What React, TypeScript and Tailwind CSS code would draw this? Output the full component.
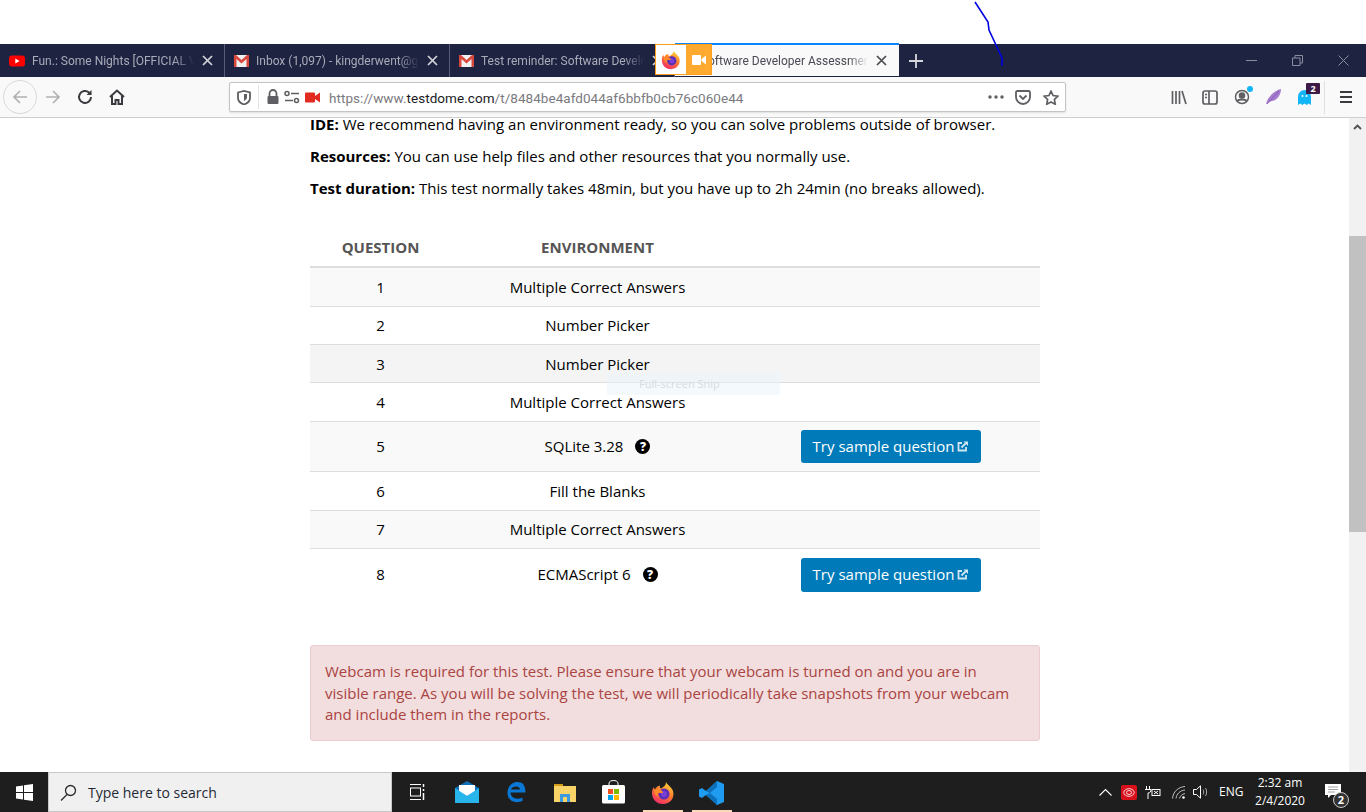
import React from "react";

const FirefoxIcon = ({ size = 24 }: { size?: number }) => (
  <svg width={size} height={size} viewBox="0 0 24 24" className="shrink-0">
    <defs>
      <linearGradient id="ffg" x1="0.7" y1="0" x2="0.2" y2="1">
        <stop offset="0" stopColor="#ffd43a" />
        <stop offset="0.45" stopColor="#ff7a2f" />
        <stop offset="1" stopColor="#f0246e" />
      </linearGradient>
    </defs>
    <path d="M15 1c1 3 5 4 7 9 2 7-3 13-10 13C5 23 1 18 1 12c0-3 1-5 2-6 0 1 .5 2 1 2.500C5 6 7 5 9 4.500 8.500 6 9 7 10 7.500 12 6 15 5 15 1z" fill="url(#ffg)" />
    <circle cx="13" cy="13" r="5.500" fill="#5b2fb5" />
    <circle cx="13" cy="13" r="3" fill="#7a3fd6" />
    <path d="M3 9c2-1 5-1 7 0 1 1 2 2 2 3H7c-1 2 0 4 2 5-3-1-6-4-6-8z" fill="#ff8a2a" />
  </svg>
);

const YouTube = () => (
  <svg width="16" height="12" viewBox="0 0 16 12" className="shrink-0">
    <rect width="16" height="11" y="0.500" rx="3" fill="#f00" />
    <path d="M6.300 3.500v5l4.200-2.500z" fill="#fff" />
  </svg>
);

const Gmail = () => (
  <svg width="15" height="12" viewBox="0 0 15 12" className="shrink-0">
    <rect width="15" height="12" fill="#f1f1f1" />
    <path d="M0 0h2l5.500 5L13 0h2v12h-2.500V4L7.500 8.500 2.500 4v8H0z" fill="#d8483c" />
  </svg>
);

const Close = ({ c = "#d5d6dc" }: { c?: string }) => (
  <svg width="11" height="11" viewBox="0 0 11 11" className="shrink-0">
    <path d="M1 1l9 9M10 1l-9 9" stroke={c} strokeWidth="1.700" />
  </svg>
);

function Tab({ icon, title, active }: { icon?: React.ReactNode; title: string; active?: boolean }) {
  return (
    <div
      className={
        active
          ? "w-[224px] h-full flex items-center pl-[36px] pr-[12px] bg-[#f9f9fa] border-t-2 border-[#0a84ff] text-[#4a4a55] -mt-px"
          : "w-[225px] h-full flex items-center pl-[9px] pr-[11px] border-r border-[#5a5d75] text-[#a9abb8]"
      }
    >
      {icon}
      <span
        className={
          active
            ? "flex-1 min-w-0 whitespace-nowrap text-[12px] pt-[1px] -ml-[3px] [mask-image:linear-gradient(to_right,black_88%,transparent)]"
            : "flex-1 min-w-0 whitespace-nowrap text-[12px] pt-[1px] ml-[7px] [mask-image:linear-gradient(to_right,black_88%,transparent)]"
        }
      >
        {title}
      </span>
      <span className="ml-[8px]">
        <Close c={active ? "#4a4a4f" : "#d5d6dc"} />
      </span>
    </div>
  );
}

function Row({ q, env, bg, h, help, btn, last }: { q: number; env: string; bg: string; h: string; help?: boolean; btn?: boolean; last?: boolean }) {
  return (
    <div className={`flex items-center ${last ? "" : "border-b border-[#dddddd]"} ${h} ${bg}`}>
      <div className="w-[141px] text-center">{q}</div>
      <div className="w-[293px] flex items-center justify-center">
        <span>{env}</span>
        {help && (
          <span className="ml-[12px] w-[15px] h-[15px] rounded-full bg-black text-white text-[12px] leading-[15px] font-extrabold text-center">?</span>
        )}
      </div>
      <div className="flex-1 flex justify-center pr-[3px]">
        {btn && (
          <div className={`w-[180px] ${last ? "h-[34px]" : "h-[33px]"} rounded-[3px] bg-[#007ab8] text-white text-[15px] flex items-center justify-center`}>
            Try sample question
            <svg width="11" height="11" viewBox="0 0 11 11" className="ml-[3px]" fill="none" stroke="#cfe6f2" strokeWidth="1.800">
              <path d="M5 2H1.500v7.500H9V6" />
              <path d="M4.500 6.500L9.500 1.500" />
              <path d="M6.500 .5H11V5z" fill="#cfe6f2" stroke="none" />
            </svg>
          </div>
        )}
      </div>
    </div>
  );
}

export default function App() {
  return (
    <div className="relative w-[1366px] h-[812px] overflow-hidden bg-white font-['Open_Sans',sans-serif] flex flex-col">
      <div className="h-[44px] bg-white shrink-0" />

      {/* Tab strip */}
      <div className="h-[33px] shrink-0 bg-[#1f2342] flex font-['Roboto',sans-serif]">
        <Tab icon={<YouTube />} title="Fun.: Some Nights [OFFICIAL V" />
        <Tab icon={<Gmail />} title="Inbox (1,097) - kingderwent@g" />
        <Tab icon={<Gmail />} title="Test reminder: Software Develop" />
        <Tab active title="oftware Developer Assessment" />
        <div className="w-[34px] flex items-center justify-center">
          <svg width="14" height="14" viewBox="0 0 14 14"><path d="M7 0v14M0 7h14" stroke="#d5d6dc" strokeWidth="1.800" /></svg>
        </div>
        <div className="flex-1 flex justify-end items-center">
          <div className="w-[46px] flex justify-center">
            <svg width="11" height="11" viewBox="0 0 11 11"><path d="M0 5.500h11" stroke="#8b8da0" /></svg>
          </div>
          <div className="w-[46px] flex justify-center">
            <svg width="11" height="11" viewBox="0 0 11 11" fill="none" stroke="#8b8da0"><path d="M.5 3h7.500v7.500H.5zM3 3V.5h7.500V8H8" /></svg>
          </div>
          <div className="w-[46px] flex justify-center">
            <svg width="11" height="11" viewBox="0 0 11 11"><path d="M.5.500l10 10M10.500.500l-10 10" stroke="#8b8da0" /></svg>
          </div>
        </div>
      </div>

      {/* Toolbar */}
      <div className="h-[41px] shrink-0 bg-[#f9f9fa] border-b border-[#cfcfd1] flex items-center pl-[3px]">
        <div className="w-[34px] h-[34px] rounded-full border border-[#d8d8da] flex items-center justify-center">
          <svg width="16" height="16" viewBox="0 0 16 16" fill="none" stroke="#b1b1b3" strokeWidth="1.700"><path d="M15 8H2M8 2L2 8l6 6" /></svg>
        </div>
        <div className="w-[32px] flex justify-center">
          <svg width="16" height="16" viewBox="0 0 16 16" fill="none" stroke="#b1b1b3" strokeWidth="1.700"><path d="M1 8h13M8 2l6 6-6 6" /></svg>
        </div>
        <div className="w-[32px] flex justify-center">
          <svg width="16" height="16" viewBox="0 0 16 16" fill="none" stroke="#3a3a3e" strokeWidth="2"><path d="M14 8a6 6 0 1 1-2-4.500L14 5" /><path d="M14.500 1v5h-5" fill="#3a3a3e" stroke="none" /></svg>
        </div>
        <div className="w-[32px] flex justify-center">
          <svg width="16" height="16" viewBox="0 0 16 16" fill="none" stroke="#3a3a3e" strokeWidth="2"><path d="M1 8l7-6.500L15 8M3 7v8h3.500v-4h3v4H13V7" /></svg>
        </div>

        {/* URL bar */}
        <div className="ml-[96px] w-[837px] h-[30px] bg-white border border-[#c4c4c6] rounded-[2px] flex items-center shadow-[0_1px_2px_rgba(0,0,0,0.1)] font-['Roboto',sans-serif]">
          <div className="w-[29px] flex justify-center border-r border-[#e4e4e6] h-[24px] items-center">
            <svg width="14" height="15" viewBox="0 0 14 15" fill="none"><path d="M1 2.500L7 1l6 1.500V8c0 3-3 5.500-6 6.500C4 13.500 1 11 1 8z" stroke="#5f5f63" strokeWidth="1.800" /><path d="M7 4h3v3.500c0 1.500-1.500 2.500-3 3.500z" fill="#5f5f63" /></svg>
          </div>
          <svg width="14" height="16" viewBox="0 0 14 16" className="ml-[7px]"><path d="M3.500 7V4.500a3.500 3.500 0 0 1 7 0V7" fill="none" stroke="#5f5f63" strokeWidth="1.800" /><rect x="1.500" y="7" width="11" height="8" rx="1" fill="#5f5f63" /></svg>
          <svg width="16" height="14" viewBox="0 0 16 14" className="ml-[4px]" fill="none" stroke="#5f5f63" strokeWidth="1.500"><circle cx="3" cy="3.500" r="2" /><path d="M7 3.500h8M1 10.500h8" /><circle cx="12.500" cy="10.500" r="2" /></svg>
          <svg width="15" height="11" viewBox="0 0 15 11" className="ml-[5px]"><rect width="10" height="10" y="0.500" rx="1" fill="#e22b20" /><path d="M10 4l5-3.500v10L10 7z" fill="#e22b20" /></svg>
          <div className="ml-[9px] pt-[2px] flex-1 text-[13.500px] text-[#7a7a80] whitespace-nowrap tracking-[0.05px]">
            https://www.<span className="text-[#1a1a1e]">testdome.com</span>/t/8484be4afd044af6bbfb0cb76c060e44
          </div>
          <svg width="16" height="4" viewBox="0 0 16 4" fill="#5f5f63" className="mr-[11px]"><circle cx="2" cy="2" r="1.700" /><circle cx="8" cy="2" r="1.700" /><circle cx="14" cy="2" r="1.700" /></svg>
          <svg width="16" height="15" viewBox="0 0 16 15" fill="none" stroke="#5f5f63" strokeWidth="1.800" className="mr-[12px]"><path d="M1 2.500c0-.8.500-1.500 1.500-1.500h11c1 0 1.500.7 1.500 1.500V7a7 7 0 0 1-14 0z" /><path d="M4.500 5.500L8 9l3.500-3.500" /></svg>
          <svg width="16" height="15" viewBox="0 0 16 15" fill="none" stroke="#5f5f63" strokeWidth="1.700" className="mr-[6px]"><path d="M8 1.200l2.100 4.300 4.700.7-3.400 3.300.8 4.700L8 12l-4.200 2.200.8-4.700L1.200 6.200l4.700-.7z" /></svg>
        </div>

        {/* Right tools */}
        <div className="ml-[105px] flex items-center">
          <svg width="16" height="15" viewBox="0 0 16 15" stroke="#5f5f63" strokeWidth="1.700"><path d="M1.500 1v13M5 1v13M8.500 1v13M11 1l4 13" /></svg>
          <svg width="16" height="15" viewBox="0 0 16 15" fill="none" stroke="#5f5f63" strokeWidth="1.700" className="ml-[15px]"><rect x="1" y="1" width="14" height="13" rx="2" /><path d="M7 1v13M3 4.500h2M3 7.500h2" /></svg>
          <div className="relative ml-[16px] w-[16px] h-[16px]">
            <svg width="16" height="16" viewBox="0 0 16 16" fill="none" stroke="#5f5f63" strokeWidth="1.500"><circle cx="8" cy="8" r="6.500" /><circle cx="8" cy="6.500" r="2.500" fill="#5f5f63" /><path d="M3.500 12c1-2 8-2 9 0" strokeWidth="2" /></svg>
            <span className="absolute -top-[3px] -right-[3px] w-[6px] h-[6px] rounded-full bg-[#12b5f5]" />
          </div>
          <svg width="15" height="16" viewBox="0 0 15 16" className="ml-[16px]"><path d="M0 15.500C1 9 7 2 15 0c0 5-3 11-9 12-2 .5-4 1.500-6 3.500z" fill="#a67ccf" /><path d="M1 15L13 2" stroke="#7b4fb0" strokeWidth="0.800" /></svg>
          <div className="relative ml-[17px] w-[14px] h-[16px]">
            <svg width="13" height="15" viewBox="0 0 13 15" className="mt-[1px]"><path d="M0 6.500a6.500 6.500 0 0 1 13 0V15l-2.200-1.500L8.700 15l-2.200-1.500L4.300 15l-2.100-1.500L0 15z" fill="#12b5f5" /><circle cx="4.500" cy="6" r="1" fill="#fff" /><circle cx="8.500" cy="6" r="1" fill="#fff" /></svg>
            <span className="absolute -top-[6px] left-[8px] w-[14px] h-[11px] rounded-[1px] bg-[#3e1a47] text-white text-[9px] leading-[11px] font-bold text-center">2</span>
          </div>
          <div className="ml-[12px] w-px h-[33px] bg-[#e0e0e2]" />
          <svg width="14" height="12" viewBox="0 0 14 12" stroke="#3a3a3e" strokeWidth="1.800" className="ml-[14px]"><path d="M1 1h12M1 6h12M1 11h12" /></svg>
        </div>
      </div>

      {/* Page */}
      <div className="flex-1 min-h-0 flex">
        <div className="flex-1 min-w-0 overflow-hidden text-black text-[15px] pl-[310px] pr-[309px]">
          <div className="-mt-[1px] h-[14px] leading-[14px] whitespace-nowrap">
            <b>IDE:</b> We recommend having an environment ready, so you can solve problems outside of browser.
          </div>
          <div className="mt-[15px] leading-[21px] whitespace-nowrap">
            <b>Resources:</b> You can use help files and other resources that you normally use.
          </div>
          <div className="mt-[11px] leading-[21px] whitespace-nowrap">
            <b>Test duration:</b> This test normally takes 48min, but you have up to 2h 24min (no breaks allowed).
          </div>

          <div className="mt-[32px]">
            <div className="flex items-center h-[37px] pb-[2px] border-b-2 border-[#dddddd] font-bold text-[#555555]">
              <div className="w-[141px] text-center">QUESTION</div>
              <div className="w-[293px] text-center">ENVIRONMENT</div>
            </div>
            <Row q={1} env="Multiple Correct Answers" bg="bg-[#f9f9f9]" h="h-[39px]" />
            <Row q={2} env="Number Picker" bg="bg-white" h="h-[38px]" />
            <Row q={3} env="Number Picker" bg="bg-[#f4f4f4] pt-[1px]" h="h-[38px]" />
            <Row q={4} env="Multiple Correct Answers" bg="bg-white" h="h-[39px]" />
            <Row q={5} env="SQLite 3.28" bg="bg-[#f9f9f9]" h="h-[50px]" help btn />
            <Row q={6} env="Fill the Blanks" bg="bg-white" h="h-[39px]" />
            <Row q={7} env="Multiple Correct Answers" bg="bg-[#f9f9f9]" h="h-[38px]" />
            <Row q={8} env="ECMAScript 6" bg="bg-white" h="h-[51px]" help btn last />
          </div>

          <div className="mt-[45px] h-[96px] bg-[#f2dede] border border-[#ebccd1] rounded-[3px] text-[#a94442] pl-[14px] pr-[15px] py-[15px] leading-[21.500px]">
            Webcam is required for this test. Please ensure that your webcam is turned on and you are in visible range. As you will be solving the test, we will periodically take snapshots from your webcam and include them in the reports.
          </div>
        </div>

        {/* Scrollbar */}
        <div className="w-[17px] shrink-0 bg-[#f1f1f1] flex flex-col">
          <div className="h-[17px] flex items-center justify-center">
            <svg width="9" height="6" viewBox="0 0 9 6" fill="none" stroke="#505050" strokeWidth="1.800"><path d="M1 5l3.500-3.500L8 5" /></svg>
          </div>
          <div className="mt-[101px] h-[296px] bg-[#c1c1c1]" />
        </div>
      </div>

      {/* Taskbar */}
      <div className="h-[40px] shrink-0 bg-[#1e1e1e] flex items-center font-['Open_Sans',sans-serif]">
        <div className="w-[48px] flex justify-center">
          <svg width="17" height="17" viewBox="0 0 17 17" fill="#fff"><path d="M0 2.500L7 1.500V8H0zM8 1.300L17 0v8H8zM0 9h7v6.500L0 14.500zM8 9h9v8l-9-1.300z" /></svg>
        </div>
        <div className="w-[344px] h-[40px] bg-[#f0f0f0] border border-[#c8c8c8] flex items-center pl-[11px] text-[14px] text-[#1f2a36]">
          <svg width="17" height="17" viewBox="0 0 17 17" fill="none" stroke="#2a2a2a" strokeWidth="1.300"><circle cx="10.500" cy="6.500" r="5" /><path d="M7 10.500L1 16.500" /></svg>
          <span className="ml-[11px] pt-[1px]">Type here to search</span>
        </div>
        <div className="w-[49px] flex justify-center">
          <svg width="16" height="16" viewBox="0 0 16 16" fill="none" stroke="#fff" strokeWidth="1"><path d="M1 .5h11M1 15.500h11" /><rect x="1.500" y="4" width="10" height="8" /><path d="M14.500 0v3M14.500 5v2M14.500 9v7" strokeWidth="1.500" /></svg>
        </div>

        <div className="w-[49px] flex justify-center ml-[1px]">
          <svg width="24" height="22" viewBox="0 0 24 22"><path d="M12 0l12 7v15H0V7z" fill="#0d6fb8" /><path d="M4 4h16v7l-8 4-8-4z" fill="#fff" /><path d="M0 7v15h24V7l-12 8z" fill="#28b5ec" /></svg>
        </div>
        <div className="w-[49px] flex justify-center">
          <svg width="20" height="23" viewBox="0 0 20 23" fill="none"><path d="M18 11.500H4.500c0 5 6 8 12 5v3.500c-7 3-15 0-15-8 0-7 5-11 10-11 5 0 8 3 8 10.500zM5 8.500h9c0-4-8-4-9 0z" fill="#0a78d4" fillRule="evenodd" /></svg>
        </div>
        <div className="w-[49px] flex justify-center">
          <svg width="22" height="19" viewBox="0 0 22 19"><path d="M0 1h9v3H0z" fill="#d19a18" /><path d="M0 3h22v16H0z" fill="#f8d468" /><path d="M6 11h10v8h-3v-5H9v5H6z" fill="#3c9ae0" /></svg>
        </div>
        <div className="w-[49px] flex justify-center">
          <svg width="23" height="24" viewBox="0 0 23 24"><path d="M7 5V3.500a4.500 3 0 0 1 9 0V5" fill="none" stroke="#ddd" strokeWidth="1.200" /><rect y="5" width="23" height="18.500" rx="1.500" fill="#fff" /><rect x="6" y="9" width="5" height="5" fill="#f25022" /><rect x="12" y="9" width="5" height="5" fill="#7fba00" /><rect x="6" y="15" width="5" height="5" fill="#00a4ef" /><rect x="12" y="15" width="5" height="5" fill="#ffb900" /></svg>
        </div>
        <div className="w-[49px] h-full flex flex-col items-center justify-end">
          <div className="mb-[5px]"><FirefoxIcon size={24} /></div>
          <div className="w-[40px] h-[2px] bg-[#fbd9b4]" />
        </div>
        <div className="w-[49px] h-full flex flex-col items-center justify-end">
          <div className="mb-[5px]">
            <svg width="25" height="24" viewBox="0 0 25 24"><path d="M18 0l7 3v18l-7 3L7 14l-4 3-3-1.500v-7L3 7l4 3z" fill="#1f9cf0" /><path d="M18 0L7 10l4 2 7-6z" fill="#0c6fba" /><path d="M18 18l-7-6-4 2 11 10z" fill="#0c6fba" /></svg>
          </div>
          <div className="w-[40px] h-[2px] bg-[#fbd9b4]" />
        </div>

        <div className="ml-auto flex items-center text-white text-[12px]">
          <svg width="13" height="8" viewBox="0 0 13 8" fill="none" stroke="#fff" strokeWidth="1.100"><path d="M.5 7.500l6-6 6 6" /></svg>
          <div className="ml-[9px] w-[16px] h-[15px] rounded-[2px] bg-[#d8101c] flex items-center justify-center">
            <svg width="12" height="9" viewBox="0 0 12 9" fill="none" stroke="#fff" strokeWidth="0.800"><ellipse cx="6" cy="4.500" rx="5.200" ry="3.800" /><ellipse cx="6" cy="4.500" rx="2.500" ry="2" /></svg>
          </div>
          <svg width="16" height="13" viewBox="0 0 16 13" fill="none" stroke="#fff" strokeWidth="1" className="ml-[8px]"><path d="M1.500 0v4M4.500 0v4M0 3.500h6c0 2-1 3.500-3 3.500v6" /><rect x="7" y="3.500" width="8" height="6" /><path d="M9 5l4 3M13 5l-4 3" /></svg>
          <svg width="14" height="13" viewBox="0 0 14 13" fill="none" stroke="#bdbdbd" strokeWidth="1" className="ml-[11px]"><path d="M.5 12.500C1 6 6 1 13 .5M4 12.500C4.500 8 8 4.500 13 4M7.500 12.500C8 10 10 8 13 7.500" /><circle cx="11.500" cy="11.500" r="1.300" fill="#fff" stroke="none" /></svg>
          <svg width="17" height="14" viewBox="0 0 17 14" fill="none" stroke="#fff" strokeWidth="1" className="ml-[7px]"><path d="M.5 4.500h3L7.500.8v12.400l-4-3.700h-3z" /><path d="M10 4.500c1 1.500 1 3.500 0 5M12.500 3c1.500 2 1.500 6 0 8" stroke="#a8a8a8" /></svg>
          <span className="ml-[9px] w-[23px] text-[12px] whitespace-nowrap">ENG</span>
          <div className="ml-[8px] w-[60px] text-center text-[12px] leading-[18px]">
            <div>2:32 am</div>
            <div>2/4/2020</div>
          </div>
          <div className="relative ml-[15px] mr-[25px] w-[16px] h-[14px]">
            <svg width="16" height="15" viewBox="0 0 16 15" className="-mt-[1px]"><path d="M0 0h16v11H6l-3 3v-3H0z" fill="#fff" /><path d="M3 3h10M3 5.500h10M3 8h7" stroke="#888" strokeWidth="0.800" /></svg>
            <span className="absolute left-[8px] top-[7px] w-[16px] h-[16px] rounded-full bg-[#333] border border-[#ccc] text-[11px] leading-[14px] text-center font-bold">2</span>
          </div>
        </div>
      </div>

      {/* Overlays */}
      <div className="absolute left-[655px] top-[44px] w-[57px] h-[31px] border border-[#ff9f1c] flex bg-white">
        <div className="w-[30px] flex items-center justify-center"><FirefoxIcon size={20} /></div>
        <div className="flex-1 bg-[#ffa92f] flex items-center justify-center">
          <svg width="14" height="10" viewBox="0 0 14 10" fill="#fff"><rect width="9" height="10" rx="1" /><path d="M9.500 4L14 .5v9L9.500 6z" /></svg>
        </div>
      </div>
      <div className="absolute left-[607px] top-[373px] w-[173px] h-[22px] bg-[#eaf3fc]/50 text-[#d5dbe2] text-[11px] leading-[22px] pl-[32px] whitespace-nowrap">
        Full-screen Snip
      </div>
      <svg className="absolute left-[970px] top-0" width="40" height="70" viewBox="0 0 40 70" fill="none" stroke="#0000e0" strokeWidth="1.600">
        <path d="M5 2l13 20 1 8 7 15 6 13v8" />
      </svg>
    </div>
  );
}
